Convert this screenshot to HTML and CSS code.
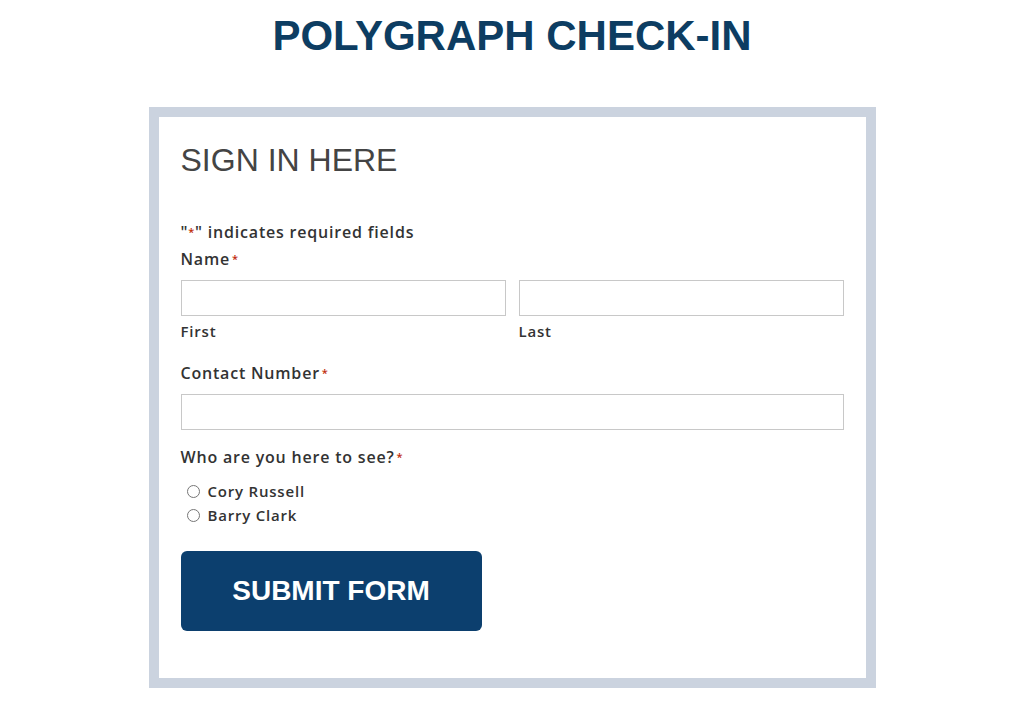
FILE: index.html
```html
<!DOCTYPE html>
<html>
<head>
    <meta charset="UTF-8">
    <title>Polygraph Check-In</title>
    <link rel="stylesheet" href="styles.css">
</head>
<body>
    <h1 class="page-title">POLYGRAPH CHECK-IN</h1>

    <div class="form-frame">
        <form class="checkin-form">
            <h2 class="form-title">SIGN IN HERE</h2>

            <p class="required-note">"<span class="req">*</span>" indicates required fields</p>

            <div class="field field-name">
                <label class="field-label">Name<span class="req">*</span></label>
                <div class="name-row">
                    <div class="name-part">
                        <input type="text" id="firstName">
                        <label for="firstName" class="sub-label">First</label>
                    </div>
                    <div class="name-part">
                        <input type="text" id="lastName">
                        <label for="lastName" class="sub-label">Last</label>
                    </div>
                </div>
            </div>

            <div class="field">
                <label class="field-label" for="contact">Contact Number<span class="req">*</span></label>
                <input type="text" id="contact">
            </div>

            <div class="field">
                <label class="field-label">Who are you here to see?<span class="req">*</span></label>
                <div class="radio-list">
                    <label class="radio-item"><input type="radio" name="who"> Cory Russell</label>
                    <label class="radio-item"><input type="radio" name="who"> Barry Clark</label>
                </div>
            </div>

            <button type="button" class="submit-btn">SUBMIT FORM</button>
        </form>
    </div>
</body>
</html>
```

FILE: styles.css
```css
body {
    margin: 0;
    font-family: "Open Sans", Arial, sans-serif;
    color: #333;
}

.page-title {
    margin: 0;
    padding-top: 12px;
    text-align: center;
    font-family: "Liberation Sans", Arial, sans-serif;
    font-size: 42px;
    font-weight: bold;
    color: #0d3d62;
}

.form-frame {
    width: 707px;
    margin: 47px auto 0;
    border: 10px solid #cbd3df;
    background: white;
}

.checkin-form {
    padding: 24px 22px 47px;
}

.form-title {
    margin: 0 0 43px;
    font-family: "Liberation Sans", Arial, sans-serif;
    font-size: 32px;
    font-weight: normal;
    color: #444;
    line-height: 1.2;
}

.required-note,
.field-label,
.sub-label,
.radio-item {
    font-size: 16px;
    line-height: 20px;
    font-weight: 600;
    letter-spacing: 0.8px;
    color: #333;
}

.required-note {
    margin: 0 0 7px;
}

.req {
    color: #c02b0a;
    font-size: 11px;
    margin-left: 2px;
    vertical-align: 2px;
}

.required-note .req {
    margin: 0;
}

.field {
    margin-bottom: 17px;
}

.field-name {
    margin-bottom: 22px;
}

.field-label {
    display: block;
    margin-bottom: 11px;
}

.name-row {
    display: flex;
    gap: 13px;
}

.name-part {
    flex: 1;
}

input[type="text"] {
    display: block;
    width: 100%;
    height: 36px;
    box-sizing: border-box;
    border: 1px solid #c8c8c8;
    border-radius: 0;
    padding: 6px 8px;
}

.sub-label {
    display: block;
    margin-top: 5px;
    font-size: 15px;
}

.radio-list {
    display: flex;
    flex-direction: column;
    gap: 4px;
    padding-left: 6px;
    margin-top: 14px;
}

.radio-item {
    display: flex;
    align-items: center;
    gap: 8px;
    font-size: 15px;
}

.radio-item input {
    margin: 0;
    width: 13px;
    height: 13px;
}

.submit-btn {
    margin-top: 9px;
    width: 301px;
    height: 80px;
    background-color: #0c3f6e;
    color: white;
    border: none;
    border-radius: 6px;
    font-family: "Liberation Sans", Arial, sans-serif;
    font-size: 28px;
    font-weight: bold;
    cursor: pointer;
}
```
